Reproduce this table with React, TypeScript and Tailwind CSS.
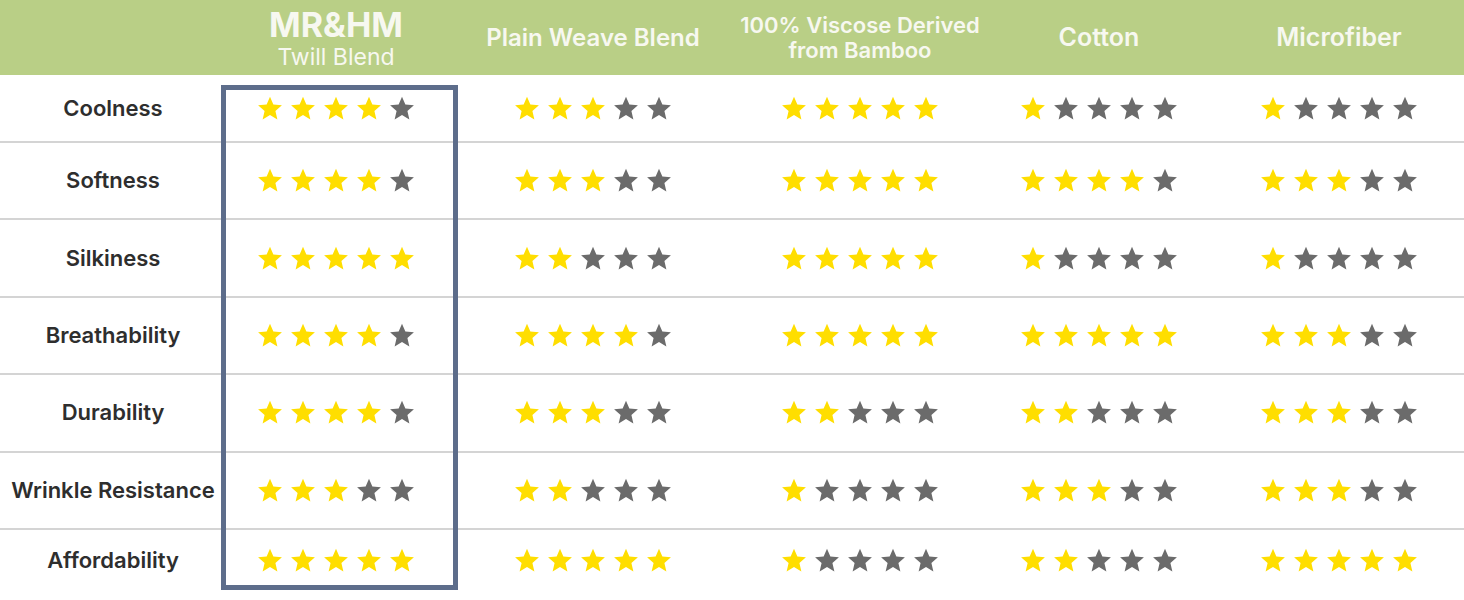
import React from "react";

const columns = [
  { key: "mrhm", w: "w-[228px]" },
  { key: "plain", w: "w-[286px]" },
  { key: "viscose", w: "w-[248px]" },
  { key: "cotton", w: "w-[230px]" },
  { key: "micro", w: "w-[250px]" },
];

const rows: { label: string; ratings: number[] }[] = [
  { label: "Coolness", ratings: [4, 3, 5, 1, 1] },
  { label: "Softness", ratings: [4, 3, 5, 4, 3] },
  { label: "Silkiness", ratings: [5, 2, 5, 1, 1] },
  { label: "Breathability", ratings: [4, 4, 5, 5, 3] },
  { label: "Durability", ratings: [4, 3, 2, 2, 3] },
  { label: "Wrinkle Resistance", ratings: [3, 2, 1, 3, 3] },
  { label: "Affordability", ratings: [5, 5, 1, 2, 5] },
];

function Star({ filled }: { filled: boolean }) {
  return (
    <svg
      viewBox="0 0 24 23"
      className={`w-[26px] h-[25px] ${filled ? "text-[#ffde00]" : "text-[#6b6b6b]"}`}
      fill="currentColor"
    >
      <path d="M12 0.6l3.1 7.3 7.9 0.7-6 5.2 1.8 7.8L12 17.5l-6.8 4.1 1.8-7.8-6-5.2 7.9-0.7z" />
    </svg>
  );
}

function Stars({ n }: { n: number }) {
  return (
    <div className="flex items-center gap-[7px]">
      {[0, 1, 2, 3, 4].map((i) => (
        <Star key={i} filled={i < n} />
      ))}
    </div>
  );
}

export default function App() {
  return (
    <div
      className="relative w-[1464px] h-[600px] overflow-hidden bg-white"
      style={{ fontFamily: "Inter, 'Liberation Sans', sans-serif" }}
    >
      {/* header */}
      <div className="flex h-[75px] bg-[#b9cf86] text-[#f7f8f0]">
        <div className="w-[222px]" />
        <div className={`${columns[0].w} flex flex-col items-center justify-center`}>
          <span className="text-[34px] font-bold leading-[38px]">MR&amp;HM</span>
          <span className="text-[23px] leading-[26px]">Twill Blend</span>
        </div>
        <div className={`${columns[1].w} flex items-center justify-center`}>
          <span className="text-[24px] font-semibold">Plain Weave Blend</span>
        </div>
        <div className={`${columns[2].w} flex flex-col items-center justify-center text-[22px] font-semibold leading-[25px]`}>
          <span>100% Viscose Derived</span>
          <span>from Bamboo</span>
        </div>
        <div className={`${columns[3].w} flex items-center justify-center`}>
          <span className="text-[25px] font-semibold">Cotton</span>
        </div>
        <div className={`${columns[4].w} flex items-center justify-center`}>
          <span className="text-[25px] font-semibold">Microfiber</span>
        </div>
      </div>

      {/* rows */}
      {rows.map((row, ri) => (
        <div
          key={row.label}
          className={`flex ${
            ri === 0
              ? "h-[66px]"
              : ri === rows.length - 1
              ? "h-[64px] border-t-2 border-[#d4d4d4]"
              : "h-[77.4px] border-t-2 border-[#d4d4d4]"
          }`}
        >
          <div className="w-[222px] pl-[4px] flex items-center justify-center text-[22px] font-semibold text-[#2e2e2e]">
            {row.label}
          </div>
          {row.ratings.map((r, ci) => (
            <div key={ci} className={`${columns[ci].w} flex items-center justify-center`}>
              <Stars n={r} />
            </div>
          ))}
        </div>
      ))}

      {/* highlight box around MR&HM column */}
      <div className="absolute left-[221px] top-[85px] w-[237px] h-[505px] border-[5px] border-[#5d6d8b]" />
    </div>
  );
}
